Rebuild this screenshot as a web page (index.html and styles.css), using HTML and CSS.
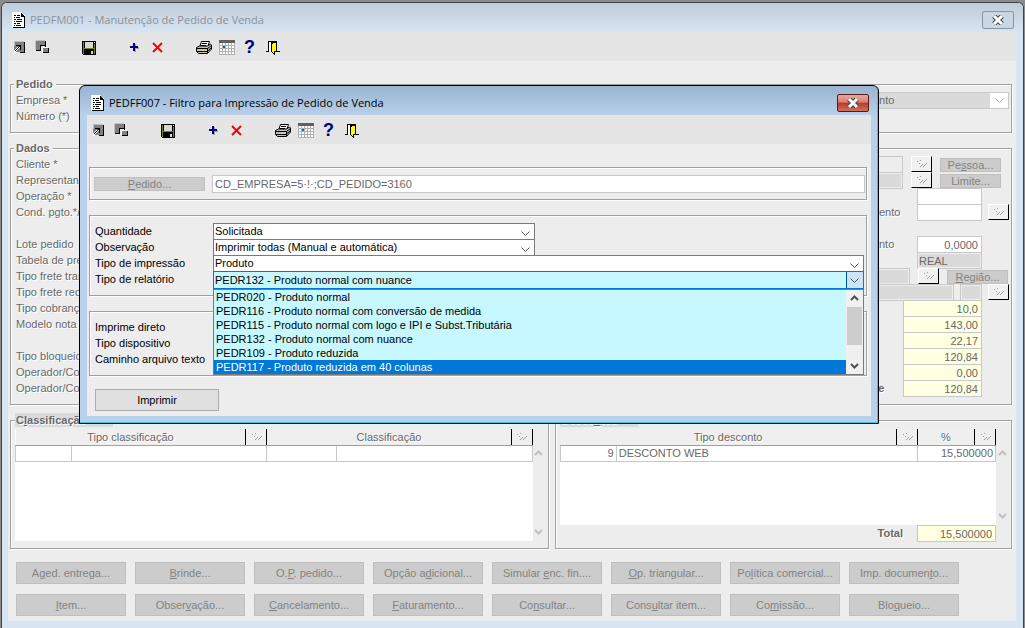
FILE: index.html
```html
<!DOCTYPE html>
<html lang="pt-BR">
<head>
  <meta charset="UTF-8" />
  <meta name="viewport" content="width=device-width, initial-scale=1.0" />
  <title>PEDFM001 - Manutenção de Pedido de Venda</title>
  <link rel="stylesheet" href="styles.css">
</head>
<body>
  <!-- Shared icons -->
  <svg class="sprite" aria-hidden="true">
    <symbol id="i-doc" viewBox="0 0 13 16" shape-rendering="crispEdges">
      <path fill="#fff" d="M0 0h10v3h3v13H0z"/>
      <path fill="#000" d="M9 1h1v1h1v1h1v1h1v12H1v-1h11V5H9zM2 3h2v1H2zM5 3h3v1H5zM2 5h1v1H2zM4 5h4v1H4zM2 7h2v1H2zM5 7h5v1H5zM2 9h1v1H2zM4 9h6v1H4zM2 11h2v1H2zM5 11h3v1H5zM2 13h1v1H2zM4 13h5v1H4z"/>
    </symbol>
    <symbol id="i-min" viewBox="0 0 17 17" shape-rendering="crispEdges">
      <path fill="#808080" d="M3 3h10v11H3z"/>
      <path fill="#c0c0c0" d="M3 3h10v1H3zM3 3h1v5H3z"/>
      <path fill="#000" d="M13 4h1v11H9v-1h4zM5 7h5v5H9V9H8V8H5zM7 9h1v1H7zM6 10h1v1H6zM5 11h1v1H5zM4 12h1v1H4z"/>
      <path fill="#fff" d="M6 9h1v1H6zM5 10h1v1H5zM4 11h1v1H4zM3 12h1v3H3zM8 9h1v1H8zM7 10h1v1H7zM6 11h1v1H6zM5 12h1v1H5zM4 13h1v1H4z"/>
    </symbol>
    <symbol id="i-max" viewBox="0 0 17 17" shape-rendering="crispEdges">
      <path fill="#808080" d="M2 3h9v5H6v5H2z"/>
      <path fill="#c0c0c0" d="M2 2h9v1H2zM1 3h1v9H1z"/>
      <path fill="#000" d="M11 3h1v6h-1V8H6V7h5zM6 8h1v5H2v-1h4z"/>
      <path fill="#808080" d="M9 10h5v4H9z"/>
      <path fill="#fff" d="M9 9h5v1H9zM8 10h1v4H8z"/>
      <path fill="#000" d="M14 10h1v5H9v-1h5z"/>
    </symbol>
    <symbol id="i-save" viewBox="0 0 17 17" shape-rendering="crispEdges">
      <path fill="#000" d="M2 3h14v14H3l-1-1z"/>
      <path fill="#808000" d="M3 4h1v12H3zM14 6h1v10h-1zM4 10h10v1H4z"/>
      <path fill="#d8d8d8" d="M5 4h8v6H5zM14 4h1v1h-1zM11 13h2v3h-2z"/>
    </symbol>
    <symbol id="i-add" viewBox="0 0 17 17" shape-rendering="crispEdges">
      <path fill="#a0a0a0" d="M8 6h2v3h3v2h-3v3H8z"/>
      <path fill="#000080" d="M7 5h2v3h3v2H9v3H7v-3H4V8h3z"/>
    </symbol>
    <symbol id="i-del" viewBox="0 0 17 17">
      <path stroke="#f00" stroke-width="2" d="M4 5l9 9M13 5l-9 9"/>
    </symbol>
    <symbol id="i-print" viewBox="0 0 17 17">
      <path fill="#fff" stroke="#000" d="M6.500 3.500h8l-2 6h-8z"/>
      <path stroke="#000" d="M7 5.500h5M6 7.500h5"/>
      <path fill="#c0c0c0" stroke="#000" d="M1.500 9.500l3-1.500h8l3-2 1 1v4l-4 4.500h-9l-2-2z"/>
      <path stroke="#000" fill="none" d="M1.500 10.500h11l4-3M2 13.500h10l4-3.500M12.500 10v5"/>
      <path stroke="#e8e800" d="M7 12.500h4"/>
    </symbol>
    <symbol id="i-cal" viewBox="0 0 17 17" shape-rendering="crispEdges">
      <path fill="#fff" d="M1 5h15v11H1z"/>
      <path fill="#606060" d="M1 2h16v3H1z"/>
      <path fill="#b0b0b0" d="M1 5h1v12H1zM4 5h1v12H4zM7 5h1v12H7zM10 5h1v12h-1zM13 5h1v12h-1zM16 5h1v12h-1zM1 7h16v1H1zM1 10h16v1H1zM1 13h16v1H1zM1 16h16v1H1z"/>
      <path fill="#0070a0" d="M5 8h2v2H5z"/>
    </symbol>
    <symbol id="i-exit" viewBox="0 0 17 17" shape-rendering="crispEdges">
      <path fill="#000" d="M4 3h9v10h3v1h-4V4H5v10H2v-1h2z"/>
      <path fill="#fff" d="M5 4h2v9H5z"/>
      <path fill="#000" d="M7 4h6v10h-2v3h-1l-3-3z"/>
      <path fill="#ff0" d="M8 6h1V5h3v8h-2v2H9v-1H8z"/>
    </symbol>
    <symbol id="i-look" viewBox="0 0 11 8" shape-rendering="crispEdges">
      <path fill="#a0a0a0" d="M1 1h1v1H1zM3 3h1v1H3zM4 0h1v1H4zM6 4h1v1H6zM5 5h1v1H5zM4 6h1v1H4zM10 3h1v1h-1zM9 4h1v1H9zM8 5h1v1H8zM7 6h1v1H7z"/>
    </symbol>
    <symbol id="i-up" viewBox="0 0 9 6">
      <path fill="none" stroke="currentColor" stroke-width="2" d="M1 5l3.500-3.500L8 5"/>
    </symbol>
    <symbol id="i-down" viewBox="0 0 9 6">
      <path fill="none" stroke="currentColor" stroke-width="2" d="M1 1l3.500 3.500L8 1"/>
    </symbol>
    <symbol id="i-close" viewBox="0 0 12 10">
      <path stroke="#404050" stroke-width="5" d="M2 1l8 8M10 1L2 9"/>
      <path stroke="#fff" stroke-width="3" d="M2 1l8 8M10 1L2 9"/>
    </symbol>
  </svg>

  <div class="window inactive">
    <header class="titlebar">
      <svg class="doc"><use href="#i-doc"/></svg>
      <h1>PEDFM001 - Manutenção de Pedido de Venda</h1>
      <button class="close" aria-label="Fechar"><svg><use href="#i-close"/></svg></button>
    </header>
    <main class="client">
      <div class="toolbar">
        <button aria-label="Minimizar"><svg><use href="#i-min"/></svg></button>
        <button aria-label="Restaurar"><svg><use href="#i-max"/></svg></button>
        <button class="sep" aria-label="Salvar"><svg><use href="#i-save"/></svg></button>
        <button class="sep" aria-label="Incluir"><svg><use href="#i-add"/></svg></button>
        <button aria-label="Excluir"><svg><use href="#i-del"/></svg></button>
        <button class="sep" aria-label="Imprimir"><svg><use href="#i-print"/></svg></button>
        <button aria-label="Calendário"><svg><use href="#i-cal"/></svg></button>
        <button class="help">?</button>
        <button aria-label="Sair"><svg><use href="#i-exit"/></svg></button>
      </div>

      <div class="page">
        <fieldset class="group">
          <legend>Pedido</legend>
          <div class="cols">
            <div class="labels">
              <label for="empresa">Empresa *</label>
              <span>Número (*)</span>
            </div>
            <div class="side">
              <select id="empresa" class="combo off" disabled><option>Orçamento</option></select>
            </div>
          </div>
        </fieldset>

        <fieldset class="group">
          <legend>Dados</legend>
          <div class="cols">
            <div class="labels">
              <span>Cliente *</span>
              <span>Representante</span>
              <span>Operação *</span>
              <span>Cond. pgto.*/</span>
              <span></span>
              <span>Lote pedido</span>
              <span>Tabela de preço</span>
              <span>Tipo frete trans.</span>
              <span>Tipo frete redes.</span>
              <span>Tipo cobrança</span>
              <span>Modelo nota f.</span>
              <span></span>
              <span>Tipo bloqueio</span>
              <span>Operador/Com.</span>
              <span>Operador/Conf.</span>
            </div>
            <div class="side">
              <div class="row wide">
                <input class="field plain" aria-label="Cliente" disabled>
                <button class="look" aria-label="Buscar cliente"><svg><use href="#i-look"/></svg></button>
                <button class="btn small" disabled>Pe<u>s</u>soa...</button>
              </div>
              <div class="row wide">
                <input class="field gray" aria-label="Representante" disabled>
                <button class="look" aria-label="Buscar representante"><svg><use href="#i-look"/></svg></button>
                <button class="btn small" disabled>Limite...</button>
              </div>
              <div class="row">
                <span class="lbl"></span>
                <input class="field" aria-label="Operação" disabled>
                <span class="tail"></span>
              </div>
              <div class="row">
                <label class="lbl" for="fat">Faturamento</label>
                <input class="field" id="fat" disabled>
                <span class="tail"><button class="look" aria-label="Buscar data"><svg><use href="#i-look"/></svg></button></span>
              </div>
              <div class="row"></div>
              <div class="row">
                <label class="lbl" for="docto">Documento</label>
                <input class="field num" id="docto" value="0,0000" disabled>
                <span class="tail"></span>
              </div>
              <div class="row">
                <span class="lbl"></span>
                <input class="field gray" aria-label="Moeda" value="REAL" disabled>
                <span class="tail"></span>
              </div>
              <div class="row wide region">
                <input class="field gray" aria-label="Transportadora" disabled>
                <button class="look" aria-label="Buscar transportadora"><svg><use href="#i-look"/></svg></button>
                <button class="btn small" disabled><u>R</u>egião...</button>
              </div>
              <div class="row">
                <input class="field gray fill" aria-label="Redespacho" disabled>
                <input class="field gray uf" aria-label="UF" disabled>
                <span class="tail"><button class="look" aria-label="Buscar redespacho"><svg><use href="#i-look"/></svg></button></span>
              </div>
              <div class="row total">
                <span class="lbl"></span>
                <input class="field num" aria-label="Quantidade" value="10,0" disabled>
                <span class="tail"></span>
              </div>
              <div class="row total">
                <span class="lbl"></span>
                <input class="field num" aria-label="Valor bruto" value="143,00" disabled>
                <span class="tail"></span>
              </div>
              <div class="row total">
                <label class="lbl" for="liquido">Líquido</label>
                <input class="field num" id="liquido" value="22,17" disabled>
                <span class="tail"></span>
              </div>
              <div class="row total">
                <span class="lbl"></span>
                <input class="field num" aria-label="Valor total" value="120,84" disabled>
                <span class="tail"></span>
              </div>
              <div class="row total">
                <span class="lbl"></span>
                <input class="field num" aria-label="Frete" value="0,00" disabled>
                <span class="tail"></span>
              </div>
              <div class="row total">
                <label class="lbl" for="restante">Restante</label>
                <input class="field num" id="restante" value="120,84" disabled>
                <span class="tail"></span>
              </div>
            </div>
          </div>
        </fieldset>

        <div class="bottom">
          <fieldset class="group list-class">
            <legend class="tab">C<u>l</u>assificação</legend>
            <div class="grid">
              <div class="sheet">
                <table>
                  <colgroup><col class="c-code"><col><col class="c-look"><col class="c-pct"><col><col class="c-look"></colgroup>
                  <thead>
                    <tr>
                      <th colspan="2">Tipo classificação</th>
                      <th><svg><use href="#i-look"/></svg></th>
                      <th colspan="2">Classificação</th>
                      <th><svg><use href="#i-look"/></svg></th>
                    </tr>
                  </thead>
                  <tbody>
                    <tr><td></td><td colspan="2"></td><td></td><td colspan="2"></td></tr>
                  </tbody>
                </table>
              </div>
              <div class="scroll"><svg><use href="#i-up"/></svg><svg><use href="#i-down"/></svg></div>
            </div>
          </fieldset>

          <fieldset class="group list-desc">
            <legend class="tab">Desco<u>n</u>tos</legend>
            <div class="grid">
              <div class="sheet">
                <table>
                  <colgroup><col class="c-code"><col><col class="c-look"><col class="c-num"><col class="c-look"></colgroup>
                  <thead>
                    <tr>
                      <th colspan="2">Tipo desconto</th>
                      <th><svg><use href="#i-look"/></svg></th>
                      <th>%</th>
                      <th><svg><use href="#i-look"/></svg></th>
                    </tr>
                  </thead>
                  <tbody>
                    <tr><td class="num">9</td><td colspan="2">DESCONTO WEB</td><td class="num" colspan="2">15,500000</td></tr>
                  </tbody>
                </table>
              </div>
              <div class="scroll"><svg><use href="#i-up"/></svg><svg><use href="#i-down"/></svg></div>
            </div>
            <div class="sum">
              <label for="total">Total</label>
              <input class="field num" id="total" value="15,500000" disabled>
            </div>
          </fieldset>
        </div>

        <div class="actions">
          <button class="btn" disabled>A<u>g</u>ed. entrega...</button>
          <button class="btn" disabled><u>B</u>rinde...</button>
          <button class="btn" disabled>O.<u>P</u>. pedido...</button>
          <button class="btn" disabled>Opção a<u>d</u>icional...</button>
          <button class="btn" disabled>Simular <u>e</u>nc. fin....</button>
          <button class="btn" disabled><u>O</u>p. triangular...</button>
          <button class="btn" disabled>Po<u>l</u>ítica comercial...</button>
          <button class="btn" disabled>Imp. documen<u>t</u>o...</button>
          <button class="btn" disabled><u>I</u>tem...</button>
          <button class="btn" disabled>Obser<u>v</u>ação...</button>
          <button class="btn" disabled><u>C</u>ancelamento...</button>
          <button class="btn" disabled><u>F</u>aturamento...</button>
          <button class="btn" disabled>Co<u>n</u>sultar...</button>
          <button class="btn" disabled>Cons<u>u</u>ltar item...</button>
          <button class="btn" disabled>Co<u>m</u>issão...</button>
          <button class="btn" disabled>Blo<u>q</u>ueio...</button>
        </div>
      </div>
    </main>
  </div>

  <div class="window dialog" role="dialog" aria-labelledby="dlg-title">
    <header class="titlebar">
      <svg class="doc"><use href="#i-doc"/></svg>
      <h2 id="dlg-title">PEDFF007 - Filtro para Impressão de Pedido de Venda</h2>
      <button class="close" aria-label="Fechar"><svg><use href="#i-close"/></svg></button>
    </header>
    <div class="client">
      <div class="toolbar">
        <button aria-label="Minimizar"><svg><use href="#i-min"/></svg></button>
        <button aria-label="Restaurar"><svg><use href="#i-max"/></svg></button>
        <button class="sep" aria-label="Salvar"><svg><use href="#i-save"/></svg></button>
        <button class="sep" aria-label="Incluir"><svg><use href="#i-add"/></svg></button>
        <button aria-label="Excluir"><svg><use href="#i-del"/></svg></button>
        <button class="sep" aria-label="Imprimir"><svg><use href="#i-print"/></svg></button>
        <button aria-label="Calendário"><svg><use href="#i-cal"/></svg></button>
        <button class="help">?</button>
        <button aria-label="Sair"><svg><use href="#i-exit"/></svg></button>
      </div>

      <form class="filter">
        <div class="box pedido">
          <button type="button" class="btn small" disabled><u>P</u>edido...</button>
          <input class="field" aria-label="Pedido" value="CD_EMPRESA=5·!·;CD_PEDIDO=3160" disabled>
        </div>

        <div class="box">
          <div class="line">
            <label for="qtd">Quantidade</label>
            <select id="qtd" class="combo half"><option>Solicitada</option></select>
          </div>
          <div class="line">
            <label for="obs">Observação</label>
            <select id="obs" class="combo half"><option>Imprimir todas (Manual e automática)</option></select>
          </div>
          <div class="line">
            <label for="imp">Tipo de impressão</label>
            <select id="imp" class="combo"><option>Produto</option></select>
          </div>
          <div class="line">
            <label for="rel">Tipo de relatório</label>
            <div class="dropdown">
              <select id="rel" class="combo open"><option>PEDR132 - Produto normal com nuance</option></select>
              <div class="popup">
                <ul role="listbox">
                  <li role="option">PEDR020 - Produto normal</li>
                  <li role="option">PEDR116 - Produto normal com conversão de medida</li>
                  <li role="option">PEDR115 - Produto normal com logo e IPI e Subst.Tributária</li>
                  <li role="option">PEDR132 - Produto normal com nuance</li>
                  <li role="option">PEDR109 - Produto reduzida</li>
                  <li role="option" class="selected" aria-selected="true">PEDR117 - Produto reduzida em 40 colunas</li>
                </ul>
                <div class="bar">
                  <svg><use href="#i-up"/></svg>
                  <span class="thumb"></span>
                  <svg><use href="#i-down"/></svg>
                </div>
              </div>
            </div>
          </div>
        </div>

        <div class="box">
          <div class="line"><span class="cap">Imprime direto</span></div>
          <div class="line"><span class="cap">Tipo dispositivo</span></div>
          <div class="line"><span class="cap">Caminho arquivo texto</span></div>
        </div>

        <button type="button" class="print">Imprimir</button>
      </form>
    </div>
  </div>
</body>
</html>
```
FILE: styles.css
```css
:root {
  --face: #ededed;
  --bar: #e5e5e5;
  --line: #a0a0a0;
  --field-line: #c8c8c8;
  --gray-text: #686868;
  --cream: #ffffe1;
  --cyan: #c8f8ff;
  --blue: #0078d7;
  --arrow: url("data:image/svg+xml,%3Csvg xmlns='http://www.w3.org/2000/svg' width='9' height='6'%3E%3Cpath d='M.5 .5l4 4 4-4' fill='none' stroke='%23505050'/%3E%3C/svg%3E");
  --arrow-off: url("data:image/svg+xml,%3Csvg xmlns='http://www.w3.org/2000/svg' width='9' height='6'%3E%3Cpath d='M.5 .5l4 4 4-4' fill='none' stroke='%23b0b0b0'/%3E%3C/svg%3E");
}

* {
  box-sizing: border-box;
  margin: 0;
  padding: 0;
}

body {
  min-height: 100vh;
  padding: 2px 1px 0;
  background: #8c8c8c;
  font-family: "Liberation Sans", Arial, sans-serif;
  font-size: 11px;
  line-height: 16px;
}

button,
input,
select {
  font: inherit;
  color: inherit;
}

.sprite {
  position: absolute;
  width: 0;
  height: 0;
}

/* Windows */
.window {
  padding: 0 7px 7px 6px;
  border: 1px solid #404048;
  border-bottom: none;
  border-radius: 6px 6px 0 0;
  background: #d7e4f2;
}

.titlebar {
  display: flex;
  align-items: center;
  height: 29px;
  padding: 4px 2px 0 4px;
}

.inactive .titlebar {
  margin: 0 -7px 0 -6px;
  padding: 4px 9px 0 10px;
  border-radius: 5px 5px 0 0;
  background: linear-gradient(#bfcddb, #d7e4f2);
}

.titlebar h1,
.titlebar h2 {
  flex: 1;
  margin-left: 5px;
  font-family: "Open Sans", "Noto Sans", sans-serif;
  font-size: 11px;
  font-weight: 400;
}

.inactive h1 {
  color: #8b929a;
}

.doc {
  width: 13px;
  height: 16px;
}

.close {
  display: flex;
  align-items: center;
  justify-content: center;
  width: 32px;
  height: 18px;
  border: 1px solid #8795a5;
  border-radius: 2px;
  background: #c9d6e4;
}

.close svg {
  width: 12px;
  height: 10px;
}

.client {
  background: var(--face);
}

.toolbar {
  display: flex;
  align-items: center;
  height: 29px;
  background: var(--bar);
}

.toolbar button {
  display: flex;
  align-items: center;
  justify-content: center;
  width: 23px;
  height: 23px;
  border: none;
  background: none;
}

.toolbar .sep {
  margin-left: 23px;
}

.toolbar svg {
  width: 17px;
  height: 17px;
}

.toolbar .help {
  color: #000080;
  font-size: 18px;
  font-weight: bold;
}

/* Main page */
.page {
  display: flex;
  flex-direction: column;
  gap: 8px;
  padding: 16px 4px 5px 2px;
  color: var(--gray-text);
}

.group {
  min-width: 0;
  padding: 1px 2px 8px 5px;
  border: 1px solid var(--line);
  box-shadow: 1px 1px 0 #fff, inset 1px 1px 0 #fff;
  text-shadow: 1px 1px 0 #fff;
}

.group legend {
  margin-left: -2px;
  padding: 0 3px 0 2px;
  background: var(--face);
  font-weight: bold;
  line-height: 14px;
}

.cols {
  display: flex;
}

.labels {
  display: flex;
  flex-direction: column;
  flex: 1;
}

.labels > * {
  height: 16px;
}

.side {
  width: 171px;
}

.row {
  display: flex;
  align-items: flex-start;
  height: 16px;
}

.lbl {
  flex: 1;
  white-space: nowrap;
}

.tail {
  display: flex;
  justify-content: flex-end;
  width: 27px;
}

.field {
  width: 65px;
  height: 17px;
  padding: 0 3px;
  border: 1px solid var(--field-line);
  background: #fff;
}

.field.gray {
  padding: 0 1px;
  background: #dadada;
  box-shadow: inset 0 0 0 1px #eee;
}

.field.plain {
  background: var(--face);
}

.num {
  text-align: right;
}

.wide {
  gap: 8px;
  padding-right: 8px;
}

.wide.region {
  padding-right: 1px;
}

.wide .field,
.fill {
  flex: 1;
  min-width: 0;
}

.uf {
  width: 22px;
  margin-left: 6px;
}

.total .lbl {
  font-weight: bold;
}

.total .field {
  width: 79px;
  background: var(--cream);
}

.look {
  display: flex;
  align-items: center;
  justify-content: center;
  width: 21px;
  height: 16px;
  border: 1px solid;
  border-color: #fff #000 #000 #fff;
  background: #f0f0f0;
}

.look svg,
th svg {
  width: 11px;
  height: 8px;
}

.btn {
  border: 1px solid #bfbfbf;
  background: #ccc;
  color: #838383;
  height: 22px;
  line-height: 20px;
  text-shadow: none;
}

.btn.small {
  width: 61px;
  height: 14px;
  margin-top: 2px;
  line-height: 12px;
}

/* Combos */
.combo {
  display: block;
  appearance: none;
  flex: 1;
  width: 100%;
  height: 17px;
  padding: 0 20px 1px 1px;
  border: 1px solid #7a7a7a;
  border-radius: 0;
  background: #fff var(--arrow) no-repeat right 4px bottom 2px;
  line-height: 14px;
}

.combo.off {
  border-color: var(--field-line);
  background: var(--arrow-off) no-repeat right 4px bottom 4px, linear-gradient(to left, #fff 18px, #dadada 18px);
  opacity: 1;
}

.combo.half {
  flex: none;
  width: 322px;
}

.combo.open {
  height: 18px;
  border-color: var(--blue);
  background: var(--arrow) no-repeat right 4px bottom 4px, linear-gradient(to left, #cce4f7 16px, #00549a 16px, #00549a 17px, var(--cyan) 17px);
}

/* Lists */
.bottom {
  display: flex;
  gap: 6px;
}

.list-class {
  flex: 540;
}

.list-desc {
  flex: 457;
}

.bottom .group {
  padding: 2px 3px 7px 4px;
}

.bottom legend.tab {
  width: 98px;
  margin-left: 0;
  padding: 0 1px;
  background: #dadada;
}

.bottom .list-desc legend {
  width: 78px;
}

.grid {
  display: flex;
}

.sheet {
  flex: 1;
  min-height: 112px;
  background: #fff;
}

.list-desc .sheet {
  min-height: 96px;
}

table {
  width: 100%;
  border-collapse: collapse;
  table-layout: fixed;
}

.c-code {
  width: 56px;
}

.c-look {
  width: 21px;
}

.c-pct {
  width: 70px;
}

.c-num {
  width: 57px;
}

th {
  height: 16px;
  border-right: 1px solid #000;
  border-bottom: 1px solid var(--line);
  background: #efefef;
  font-weight: 400;
  line-height: 14px;
}

th svg {
  display: block;
  margin: 0 auto;
}

td {
  height: 16px;
  padding: 0 2px;
  border: 1px solid var(--field-line);
  line-height: 14px;
}

.scroll {
  display: flex;
  flex-direction: column;
  align-items: center;
  justify-content: space-between;
  width: 12px;
  padding: 21px 0 6px;
  color: #c0c0c0;
}

.scroll svg,
.bar svg {
  width: 9px;
  height: 6px;
}

.sum {
  display: flex;
  justify-content: flex-end;
  gap: 14px;
  height: 16px;
  margin-right: 12px;
}

.sum label {
  font-weight: bold;
}

.sum .field {
  width: 79px;
  background: var(--cream);
}

.actions {
  display: grid;
  grid-template-columns: repeat(8, 1fr);
  gap: 10px 9px;
  padding: 5px 53px 0 6px;
}

/* Print filter dialog */
.dialog {
  position: absolute;
  top: 85px;
  left: 79px;
  right: 146px;
  padding: 0 7px 7px;
  border: 1px solid #000;
  border-radius: 6px 6px 0 0;
  background: linear-gradient(#99b4d1, #b9d1ea 30px);
  box-shadow: inset -1px -1px 0 #28c8e0;
}

.dialog .close {
  border-color: #5a1818;
  background: linear-gradient(#e9a99c 0, #d98070 45%, #b83a24 50%, #d0705c 100%);
}

.filter {
  display: flex;
  flex-direction: column;
  gap: 15px;
  padding: 23px 4px 5px 2px;
}

.box {
  padding: 7px 2px 8px 5px;
  border: 1px solid var(--line);
  box-shadow: 1px 1px 0 #fff, inset 1px 1px 0 #fff;
}

.box.pedido {
  display: flex;
  align-items: center;
  gap: 7px;
  padding: 7px 1px 6px 4px;
}

.pedido .btn {
  width: 111px;
  margin: 0;
}

.pedido .field {
  flex: 1;
  height: 18px;
  padding: 0 2px;
  color: var(--gray-text);
}

.line {
  display: flex;
  height: 16px;
}

.line label,
.cap {
  width: 118px;
}

.dropdown {
  position: relative;
  flex: 1;
}

.popup {
  position: absolute;
  top: 18px;
  left: 0;
  right: 0;
  z-index: 1;
  display: flex;
  border: 1px solid #7a7a7a;
  background: var(--cyan);
}

.popup ul {
  flex: 1;
  list-style: none;
}

.popup li {
  padding-left: 2px;
  line-height: 14px;
}

.popup .selected {
  background: var(--blue);
  color: #fff;
}

.bar {
  display: flex;
  flex-direction: column;
  align-items: center;
  width: 17px;
  padding: 5px 0;
  background: #f0f0f0;
  color: #505050;
}

.thumb {
  width: 15px;
  height: 38px;
  margin: 6px 0 auto;
  background: #cdcdcd;
}

.print {
  align-self: flex-start;
  width: 124px;
  height: 22px;
  margin: -2px 0 0 6px;
  border: 1px solid #adadad;
  background: #e1e1e1;
}
```
